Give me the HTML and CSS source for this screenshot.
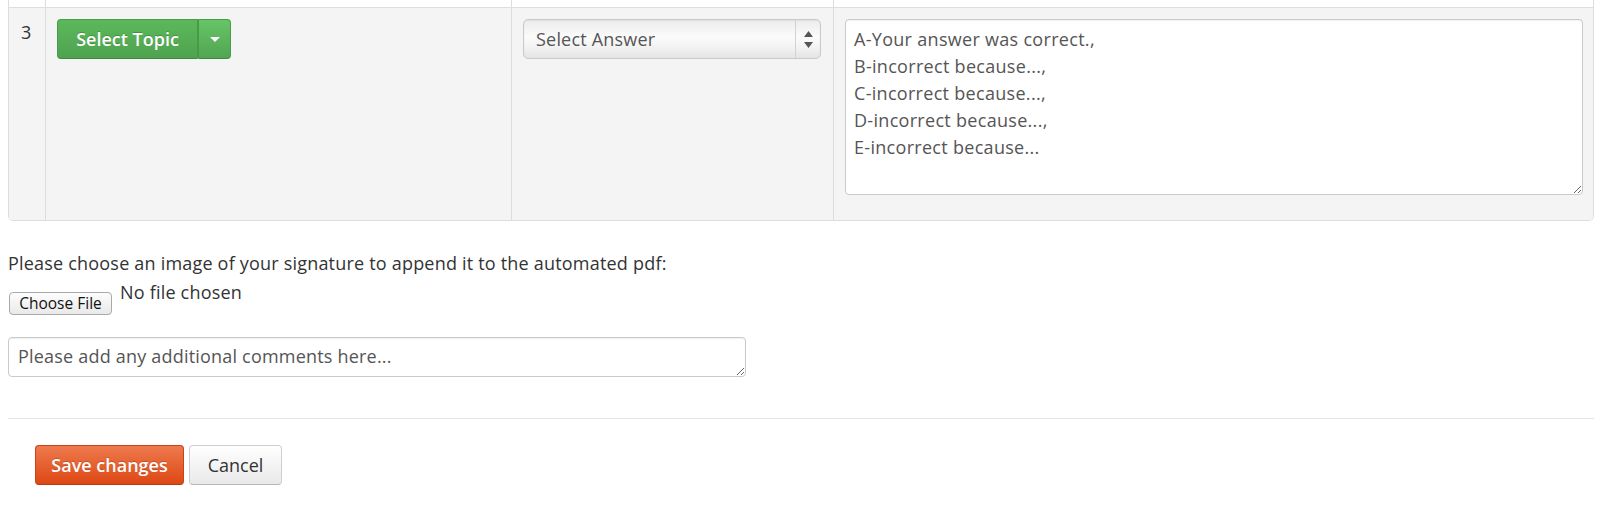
FILE: index.html
```html
<!DOCTYPE html>
<html>
<head>
<meta charset="utf-8">
<link rel="stylesheet" href="styles.css">
</head>
<body>
<div class="tbl">
  <div class="cell prev first"></div>
  <div class="cell prev"></div>
  <div class="cell prev"></div>
  <div class="cell prev"></div>

  <div class="cell row first num">3</div>
  <div class="cell row">
    <div class="btn-group">
      <button class="btn-success main">Select Topic</button>
      <button class="btn-success caret-btn"><span class="caret"></span></button>
    </div>
  </div>
  <div class="cell row">
    <div class="select-wrap">
      <select class="select">
        <option>Select Answer</option>
      </select>
      <span class="arrows">
        <svg width="9" height="17" viewBox="0 0 9 17"><path d="M4.5 0 L9 6 L0 6 Z" fill="#555"/><path d="M0 11 L9 11 L4.5 17 Z" fill="#555"/></svg>
      </span>
    </div>
  </div>
  <div class="cell row">
    <textarea class="feedback">A-Your answer was correct.,
B-incorrect because...,
C-incorrect because...,
D-incorrect because...,
E-incorrect because...</textarea>
  </div>
</div>

<p class="sig-label">Please choose an image of your signature to append it to the automated pdf:</p>
<div class="file-row">
  <label class="file-btn">Choose File</label>
  <span class="file-name">No file chosen</span>
</div>
<textarea class="comments" placeholder="Please add any additional comments here..."></textarea>

<div class="actions">
  <button class="btn btn-primary">Save changes</button>
  <button class="btn btn-default">Cancel</button>
</div>
</body>
</html>
```
FILE: styles.css
```css
* { box-sizing: border-box; }
html, body { background: #fff; }
body {
  margin: 0;
  padding: 0 6px 0 8px;
  font-family: "Open Sans", "Noto Sans", sans-serif;
  font-size: 18px;
  line-height: 27px;
  letter-spacing: 0.2px;
  color: #333;
}

.tbl {
  display: grid;
  grid-template-columns: 37px 466px 322px 761px;
  width: 1586px;
  border-bottom: 1px solid #ddd;
  border-right: 1px solid #ddd;
  border-radius: 0 0 5px 5px;
  overflow: hidden;
}
.cell {
  border-left: 1px solid #ddd;
}
.cell.prev { height: 7px; background: #fff; }
.cell.row {
  border-top: 1px solid #ddd;
  background: #f4f4f4;
  padding: 11px;
  height: 213px;
}
.num { padding-left: 12px !important; color: #333; }

.btn-group { display: flex; }
.btn-success {
  font-family: inherit;
  font-size: 18px;
  font-weight: 600;
  letter-spacing: 0;
  color: #fff;
  height: 40px;
  border: 1px solid #4a9a4a;
  border-bottom-color: #3f8a3f;
  background: linear-gradient(#5cb85c, #4fa34f);
  text-shadow: 0 -1px 0 rgba(0,0,0,.2);
  margin: 0;
}
.btn-success.main {
  width: 141px;
  border-radius: 4px 0 0 4px;
  padding: 0 0 1px;
}
.btn-success.caret-btn {
  width: 33px;
  border-left: 1px solid #479847;
  border-radius: 0 4px 4px 0;
  background: linear-gradient(#66c466, #52a652);
  display: flex;
  align-items: center;
  justify-content: center;
  padding: 0;
}
.caret {
  width: 0; height: 0;
  border-left: 5px solid transparent;
  border-right: 5px solid transparent;
  border-top: 5px solid #fff;
}

.select-wrap { position: relative; width: 298px; height: 40px; }
.select {
  appearance: none;
  -webkit-appearance: none;
  width: 298px;
  height: 40px;
  font-family: inherit;
  font-size: 18px;
  letter-spacing: 0.2px;
  color: #555;
  padding: 0 0 1px 12px;
  border: 1px solid #c9c9c9;
  border-radius: 5px;
  background: linear-gradient(#ececec, #fbfbfb 45%, #f1f1f1 75%, #e4e4e4);
  box-shadow: inset 0 1px 2px rgba(0,0,0,.06);
}
.arrows {
  position: absolute;
  top: 1px;
  right: 1px;
  bottom: 1px;
  width: 25px;
  border-left: 1px solid #d2d2d2;
  display: flex;
  align-items: center;
  justify-content: center;
  pointer-events: none;
}

.feedback {
  display: block;
  width: 738px;
  height: 176px;
  font-family: inherit;
  font-size: 18px;
  line-height: 27px;
  letter-spacing: 0.3px;
  color: #555;
  padding: 6px 8px;
  border: 1px solid #cacaca;
  border-radius: 4px;
  background: #fff;
  box-shadow: inset 0 1px 1px rgba(0,0,0,.06);
  resize: vertical;
  margin: 0;
}

.sig-label { margin: 29px 0 0; }
.file-row { display: flex; align-items: flex-start; height: 60px; }
.file-btn {
  margin: 15px 0 0 1px;
  width: 103px;
  height: 23px;
  font-size: 15.5px;
  line-height: 21px;
  letter-spacing: 0;
  color: #111;
  text-align: center;
  border: 1px solid #a9a9a9;
  border-radius: 4px;
  background: linear-gradient(#fdfdfd, #e9e9e9);
}
.file-name { margin: 2px 0 0 8px; }

.comments {
  display: block;
  width: 738px;
  height: 40px;
  font-family: inherit;
  font-size: 18px;
  line-height: 27px;
  letter-spacing: 0.2px;
  padding: 5px 9px;
  border: 1px solid #cacaca;
  border-radius: 4px;
  color: #555;
  box-shadow: inset 0 1px 1px rgba(0,0,0,.06);
  margin: 0;
}
.comments::placeholder { color: #555; }

.actions {
  margin-top: 41px;
  border-top: 1px solid #e5e5e5;
  width: 1586px;
  padding: 26px 27px;
  display: flex;
  gap: 5px;
}
.btn {
  font-family: inherit;
  font-size: 18px;
  height: 40px;
  border-radius: 4px;
  padding: 0 10px 1px;
  margin: 0;
  letter-spacing: 0;
}
.btn-primary {
  width: 149px;
  color: #fff;
  font-weight: 600;
  border: 1px solid #c9431a;
  border-bottom-color: #b23a15;
  background: linear-gradient(#ee7a4e, #dd4814);
  text-shadow: 0 -1px 0 rgba(0,0,0,.2);
}
.btn-default {
  width: 93px;
  color: #333;
  border: 1px solid #cfcfcf;
  border-bottom-color: #b7b7b7;
  background: linear-gradient(#fff, #e9e9e9);
}
```
